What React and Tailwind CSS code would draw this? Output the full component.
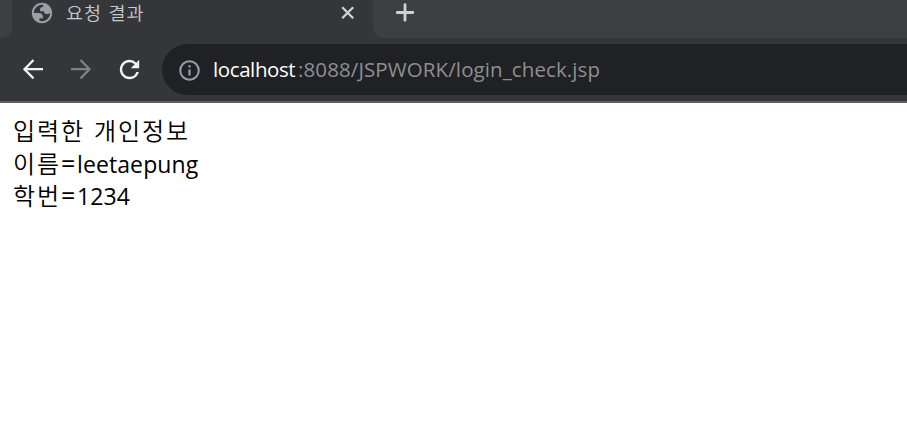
const latin = "font-['Open_Sans','Noto_Sans_CJK_KR',sans-serif]";
const korean = "font-['Noto_Sans_CJK_KR',sans-serif] font-[350]";

function Tab() {
  return (
    <div className="flex h-[38px] w-[361px] shrink-0 items-start bg-[#35363a] pl-[19px]">
      <svg className="mt-[2px] h-[22px] w-[22px] shrink-0" viewBox="1.2 1.2 21.6 21.6" fill="#9aa0a6">
        <path fillRule="evenodd" d="M12 2C6.48 2 2 6.48 2 12s4.48 10 10 10 10-4.48 10-10S17.52 2 12 2zM4 12h4.4c3.407.022 4.922 1.73 4.543 5.127H9.488v2.47a8.004 8.004 0 0 0 10.498-8.083C19.327 12.504 18.332 13 17 13c-2.137 0-3.206-.916-3.206-2.75h-3.748c-.274-2.728.683-4.092 2.87-4.092 0-.975.327-1.597.811-1.97A8.004 8.004 0 0 0 4 12z" />
      </svg>
      <span className={`ml-[13px] w-[260px] whitespace-nowrap text-[18.5px] leading-[24px] tracking-[1.1px] [word-spacing:1px] text-[#c8c9cb] ${korean}`}>
        요청 결과
      </span>
      <svg className="ml-[15px] mt-[6px] h-[14px] w-[14px] shrink-0" viewBox="0 0 14 14" fill="none" stroke="#d0d1d4" strokeWidth="2.3">
        <path d="M1.2 1.2l11 11M12.2 1.2l-11 11" />
      </svg>
    </div>
  );
}

function TabStrip() {
  return (
    <div className="flex h-[38px] bg-[#35363a]">
      <div className="h-[38px] w-[12px] shrink-0 rounded-br-[11px] bg-[#3c4043]" />
      <Tab />
      <div className="h-[38px] flex-1 rounded-bl-[11px] bg-[#3c4043] pl-[23px] pt-[3px]">
        <svg className="h-[19px] w-[19px]" viewBox="0 0 19 19" fill="none" stroke="#d0d1d4" strokeWidth="2.8" strokeLinecap="round">
          <path d="M9 1.7v15.6M1.2 9.5h15.6" />
        </svg>
      </div>
    </div>
  );
}

function Toolbar() {
  return (
    <div className="flex h-[63px] items-start bg-[#35363a] pl-[22px] pt-[6px]">
      <svg className="mt-[14px] h-[22px] w-[22px] shrink-0" viewBox="0 0 22 22" fill="none" stroke="#f1f3f4" strokeWidth="2.3">
        <path d="M21 11.2H2.5M11.5 2l-9 9.2 9 9.2" />
      </svg>
      <svg className="ml-[27px] mt-[14px] h-[22px] w-[22px] shrink-0" viewBox="0 0 22 22" fill="none" stroke="#808184" strokeWidth="2.3">
        <path d="M0 11.2h18.5M9.5 2l9 9.2-9 9.2" />
      </svg>
      <svg className="ml-[22px] mt-[11px] h-[29px] w-[29px] shrink-0" viewBox="0 0 24 24" fill="#f1f3f4">
        <path d="M17.65 6.35A7.958 7.958 0 0 0 12 4c-4.42 0-7.99 3.58-7.99 8s3.57 8 7.99 8c3.73 0 6.84-2.55 7.73-6h-2.08A5.99 5.99 0 0 1 12 18c-3.31 0-6-2.69-6-6s2.69-6 6-6c1.66 0 3.14.69 4.22 1.78L13 11h7V4l-2.35 2.35z" />
      </svg>
      <div className="ml-[18px] flex h-[51px] flex-1 items-start rounded-l-full bg-[#202124] pl-[16px]">
        <svg className="mt-[15px] h-[23px] w-[23px] shrink-0" viewBox="0 0 23 23" fill="none" stroke="#9aa0a6" strokeWidth="2">
          <circle cx="11.5" cy="11.5" r="9.3" />
          <path d="M11.5 10.4v6M11.5 6.2v2.3" strokeWidth="2.2" />
        </svg>
        <div className={`ml-[12px] mt-[10px] flex whitespace-nowrap text-[20.5px] leading-[30px] ${latin}`}>
          <span className="w-[85px] font-medium tracking-[-0.4px] text-white">localhost</span>
          <span className="tracking-[0.1px] text-[#8e8f92]">:8088/JSPWORK/login_check.jsp</span>
        </div>
      </div>
    </div>
  );
}

function Field({ label, value }) {
  return (
    <p className="flex h-[32px] items-start">
      <span className={`w-[48px] whitespace-nowrap text-[24px] tracking-[1.8px] ${korean}`}>{label}</span>
      <span className="w-[16px] text-[25px]">=</span>
      <span className="pt-px text-[23px] tracking-[0.1px]">{value}</span>
    </p>
  );
}

export default function App() {
  return (
    <div className="h-[433px] w-[907px] overflow-hidden bg-white">
      <TabStrip />
      <Toolbar />
      <div className="h-[2px] bg-[#5e5d62]" />
      <main className={`pl-[13px] pt-[11px] text-[24px] leading-[32px] text-black ${latin}`}>
        <p className={`mb-px text-[24px] tracking-[1.9px] [word-spacing:1.8px] ${korean}`}>입력한 개인정보</p>
        <Field label="이름" value="leetaepung" />
        <Field label="학번" value="1234" />
      </main>
    </div>
  );
}
